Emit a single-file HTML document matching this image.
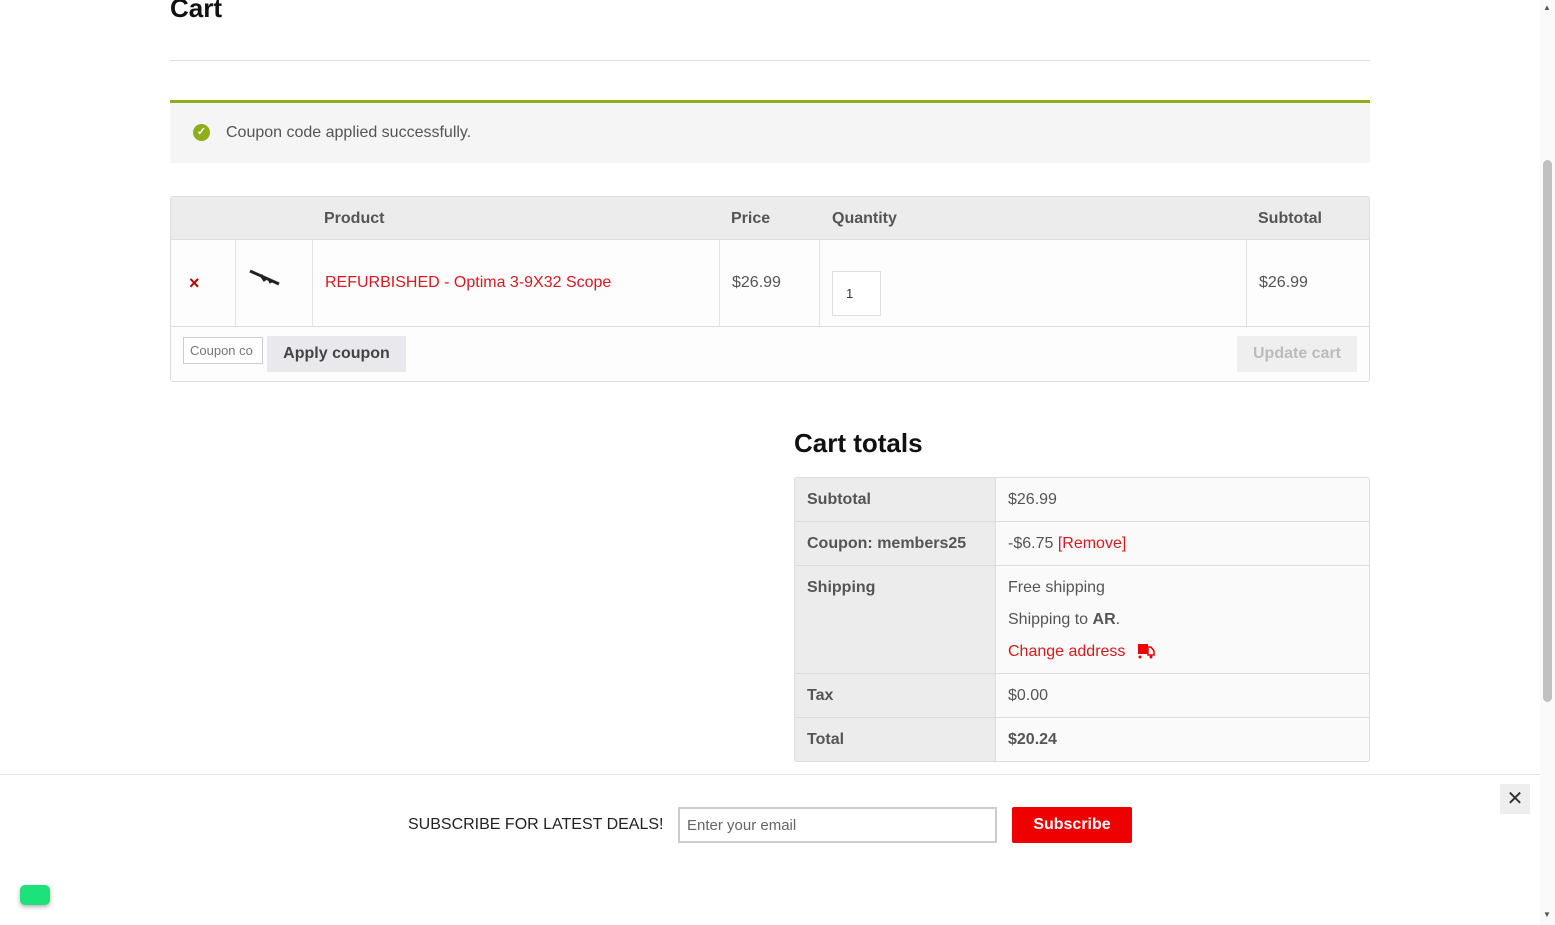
<!DOCTYPE html>
<html><head><style>
*{box-sizing:border-box;margin:0;padding:0}
body{width:1555px;height:925px;overflow:hidden;background:#fff;font-family:"Liberation Sans",sans-serif;color:#555;position:relative;font-size:16px}
.a{position:absolute}
.red{color:#d71920}
</style></head><body>
<div class="a" style="left:170px;top:-7px;font-size:26px;font-weight:bold;color:#111">Cart</div>
<div class="a" style="left:170px;top:60px;width:1200px;height:1px;background:#ddd"></div>
<div class="a" style="left:170px;top:100px;width:1200px;height:63px;background:#f5f5f5;border-top:3px solid #8fae1b"></div>
<div class="a" style="left:193px;top:124px;width:17px;height:17px;border-radius:50%;background:#8fae1b;color:#fff;font-size:11px;text-align:center;line-height:17px;font-weight:bold">✓</div>
<div class="a" style="left:226px;top:124px;font-size:16px;color:#555">Coupon code applied successfully.</div>

<div class="a" style="left:170px;top:196px;width:1200px;height:186px;border:1px solid #ddd;border-radius:3px;background:#fdfdfd;overflow:hidden">
 <div class="a" style="left:0;top:0;width:1200px;height:43px;background:#ececec;border-bottom:1px solid #ddd"></div>
 <div class="a" style="left:153px;top:13px;font-weight:bold;font-size:16px">Product</div>
 <div class="a" style="left:560px;top:13px;font-weight:bold">Price</div>
 <div class="a" style="left:661px;top:13px;font-weight:bold">Quantity</div>
 <div class="a" style="left:1087px;top:13px;font-weight:bold">Subtotal</div>
 <div class="a" style="left:64px;top:43px;width:1px;height:86px;background:#e3e3e3"></div>
 <div class="a" style="left:141px;top:43px;width:1px;height:86px;background:#e3e3e3"></div>
 <div class="a" style="left:548px;top:43px;width:1px;height:86px;background:#e3e3e3"></div>
 <div class="a" style="left:648px;top:43px;width:1px;height:86px;background:#e3e3e3"></div>
 <div class="a" style="left:1075px;top:43px;width:1px;height:86px;background:#e3e3e3"></div>
 <div class="a" style="left:0;top:129px;width:1200px;height:1px;background:#ddd"></div>
 <div class="a" style="left:18px;top:76px;color:#b00;font-weight:bold;font-size:18px">×</div>
 <svg class="a" style="left:78px;top:72px" width="32" height="20"><path d="M1 2 L30 15" stroke="#222" stroke-width="3"/><path d="M12 6 l4 6 M20 10 l2 4" stroke="#222" stroke-width="3"/></svg>
 <div class="a red" style="left:154px;top:77px">REFURBISHED - Optima 3-9X32 Scope</div>
 <div class="a" style="left:561px;top:77px">$26.99</div>
 <div class="a" style="left:661px;top:74px;width:49px;height:45px;border:1px solid #ddd;background:#fff;font-size:13px;padding:14px 0 0 13px;color:#333">1</div>
 <div class="a" style="left:1088px;top:77px">$26.99</div>
 <div class="a" style="left:12px;top:140px;width:80px;height:27px;border:1px solid #ccc;background:#fff;font-size:13px;color:#777;padding:5px 6px;white-space:nowrap;overflow:hidden">Coupon co</div>
 <div class="a" style="left:96px;top:139px;width:139px;height:36px;background:#e9e9ed;font-weight:bold;color:#444;font-size:16px;text-align:center;line-height:36px">Apply coupon</div>
 <div class="a" style="left:1066px;top:139px;width:120px;height:36px;background:#efefef;font-weight:bold;color:#bbb;text-align:center;line-height:36px">Update cart</div>
</div>

<div class="a" style="left:794px;top:428px;font-size:26px;font-weight:bold;color:#111">Cart totals</div>
<div class="a" style="left:794px;top:477px;width:576px;height:285px;border:1px solid #ddd;border-radius:3px;background:#fafafa;overflow:hidden">
 <div class="a" style="left:0;top:0;width:201px;height:285px;background:#ececec;border-right:1px solid #ddd"></div>
 <div class="a" style="left:0;top:43px;width:576px;height:1px;background:#ddd"></div>
 <div class="a" style="left:0;top:87px;width:576px;height:1px;background:#ddd"></div>
 <div class="a" style="left:0;top:195px;width:576px;height:1px;background:#ddd"></div>
 <div class="a" style="left:0;top:239px;width:576px;height:1px;background:#ddd"></div>
 <div class="a" style="left:12px;top:13px;font-weight:bold">Subtotal</div>
 <div class="a" style="left:12px;top:57px;font-weight:bold">Coupon: members25</div>
 <div class="a" style="left:12px;top:101px;font-weight:bold">Shipping</div>
 <div class="a" style="left:12px;top:209px;font-weight:bold">Tax</div>
 <div class="a" style="left:12px;top:253px;font-weight:bold">Total</div>
 <div class="a" style="left:213px;top:13px">$26.99</div>
 <div class="a" style="left:213px;top:57px">-$6.75 <span class="red">[Remove]</span></div>
 <div class="a" style="left:213px;top:101px">Free shipping</div>
 <div class="a" style="left:213px;top:133px">Shipping to <b>AR</b>.</div>
 <div class="a red" style="left:213px;top:165px">Change address</div>
 <svg class="a" style="left:342px;top:165px" width="18" height="16"><rect x="1" y="1" width="10" height="10" fill="#e00"/><path d="M11 4h3l3 4v4h-6z" fill="none" stroke="#e00" stroke-width="1.5"/><circle cx="3" cy="14" r="1.5" fill="#e00"/><circle cx="14" cy="14" r="1.5" fill="#e00"/></svg>
 <div class="a" style="left:213px;top:209px">$0.00</div>
 <div class="a" style="left:213px;top:253px;font-weight:bold">$20.24</div>
</div>

<div class="a" style="left:0;top:774px;width:1540px;height:151px;background:#fff;border-top:1px solid #e5e5e5"></div>
<div class="a" style="left:408px;top:816px;font-size:16px;color:#222">SUBSCRIBE FOR LATEST DEALS!</div>
<div class="a" style="left:678px;top:807px;width:319px;height:36px;border:2px solid #ccc;background:#fff;font-size:15px;color:#666;padding:8px 7px">Enter your email</div>
<div class="a" style="left:1012px;top:807px;width:120px;height:36px;background:#e00;color:#fff;font-weight:bold;text-align:center;line-height:36px;border-radius:2px">Subscribe</div>
<div class="a" style="left:1500px;top:784px;width:30px;height:30px;background:#eee;text-align:center;line-height:30px;font-size:20px;color:#333">✕</div>
<div class="a" style="left:20px;top:885px;width:30px;height:20px;background:#1de27a;border-radius:5px;box-shadow:0 2px 4px rgba(0,0,0,.3)"></div>

<div class="a" style="left:1540px;top:0;width:15px;height:925px;background:#fafafa"></div>
<div class="a" style="left:1543px;top:160px;width:9px;height:542px;background:#c1c1c1;border-radius:5px"></div>
<div class="a" style="left:1543px;top:3px;font-size:8px;color:#555">▲</div>
<div class="a" style="left:1543px;top:910px;font-size:8px;color:#555">▼</div>
</body></html>
